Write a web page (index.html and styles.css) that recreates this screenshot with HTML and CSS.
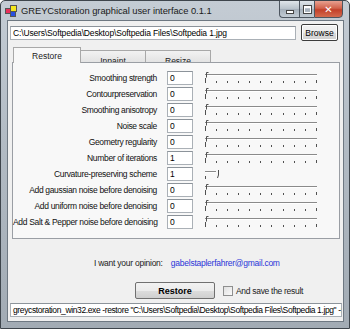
FILE: index.html
```html
<!DOCTYPE html>
<html>
<head>
<meta charset="utf-8">
<link rel="stylesheet" href="styles.css">
</head>
<body>
<div class="window">
  <div class="titlebar">
    <svg class="appicon" width="12" height="12" viewBox="0 0 12 12">
      <rect x="0.5" y="3.5" width="5" height="5" fill="#e8305a" stroke="#555"/>
      <rect x="5.5" y="0.5" width="6" height="6" fill="#f4e820" stroke="#555"/>
      <rect x="5.5" y="6.5" width="5" height="5" fill="#2850e0" stroke="#555"/>
    </svg>
    <span class="title">GREYCstoration graphical user interface 0.1.1</span>
    <div class="controls">
      <div class="ctl min"><span class="dash"></span></div>
      <div class="ctl max"><span class="sq"></span></div>
      <div class="ctl close">✕</div>
    </div>
  </div>
  <div class="client">
    <div class="pathrow">
      <div class="field path">C:\Users\Softpedia\Desktop\Softpedia Files\Softpedia 1.jpg</div>
      <div class="btn browse">Browse</div>
    </div>
    <div class="tabs">
      <div class="tab active">Restore</div>
      <div class="tab">Inpaint</div>
      <div class="tab">Resize</div>
    </div>
    <div class="panel">
      <div class="grid">
        <div class="lbl">Smoothing strength</div><div class="field num">0</div>
        <svg class="slider" width="116" height="14"><path class="groove" d="M1 3.5H113"/><path class="grooveL" d="M1 4.5H113"/><path class="thumb" d="M2.5 1.5v5M2.5 1.5h2"/><path class="ticks" d="M1.5 7v5M12.5 10v2M23.5 10v2M34.5 10v2M45.5 10v2M56.5 10v2M67.5 10v2M79.5 10v2M90.5 10v2M101.5 10v2M112.5 9v3"/></svg>
        <div class="lbl">Contourpreservation</div><div class="field num">0</div>
        <svg class="slider" width="116" height="14"><path class="groove" d="M1 3.5H113"/><path class="grooveL" d="M1 4.5H113"/><path class="thumb" d="M2.5 1.5v5M2.5 1.5h2"/><path class="ticks" d="M1.5 7v5M12.5 10v2M23.5 10v2M34.5 10v2M45.5 10v2M56.5 10v2M67.5 10v2M79.5 10v2M90.5 10v2M101.5 10v2M112.5 9v3"/></svg>
        <div class="lbl">Smoothing anisotropy</div><div class="field num">0</div>
        <svg class="slider" width="116" height="14"><path class="groove" d="M1 3.5H113"/><path class="grooveL" d="M1 4.5H113"/><path class="thumb" d="M2.5 1.5v5M2.5 1.5h2"/><path class="ticks" d="M1.5 7v5M12.5 10v2M23.5 10v2M34.5 10v2M45.5 10v2M56.5 10v2M67.5 10v2M79.5 10v2M90.5 10v2M101.5 10v2M112.5 9v3"/></svg>
        <div class="lbl">Noise scale</div><div class="field num">0</div>
        <svg class="slider" width="116" height="14"><path class="groove" d="M1 3.5H113"/><path class="grooveL" d="M1 4.5H113"/><path class="thumb" d="M2.5 1.5v5M2.5 1.5h2"/><path class="ticks" d="M1.5 7v5M12.5 10v2M23.5 10v2M34.5 10v2M45.5 10v2M56.5 10v2M67.5 10v2M79.5 10v2M90.5 10v2M101.5 10v2M112.5 9v3"/></svg>
        <div class="lbl">Geometry regularity</div><div class="field num">0</div>
        <svg class="slider" width="116" height="14"><path class="groove" d="M1 3.5H113"/><path class="grooveL" d="M1 4.5H113"/><path class="thumb" d="M2.5 1.5v5M2.5 1.5h2"/><path class="ticks" d="M1.5 7v5M12.5 10v2M23.5 10v2M34.5 10v2M45.5 10v2M56.5 10v2M67.5 10v2M79.5 10v2M90.5 10v2M101.5 10v2M112.5 9v3"/></svg>
        <div class="lbl">Number of iterations</div><div class="field num">1</div>
        <svg class="slider" width="116" height="14"><path class="groove" d="M1 3.5H113"/><path class="grooveL" d="M1 4.5H113"/><path class="thumb" d="M2.5 1.5v5M2.5 1.5h2"/><path class="ticks" d="M1.5 7v5M12.5 10v2M23.5 10v2M34.5 10v2M45.5 10v2M56.5 10v2M67.5 10v2M79.5 10v2M90.5 10v2M101.5 10v2M112.5 9v3"/></svg>
        <div class="lbl">Curvature-preserving scheme</div><div class="field num">1</div>
        <svg class="slider" width="116" height="14"><path class="groove" d="M1 4.5H12"/><path class="grooveL" d="M1 5.5H12"/><path class="thumb" d="M14.5 3v5M14.5 8l-1 3"/><path class="ticks" d="M1.5 9v3"/></svg>
        <div class="lbl">Add gaussian noise before denoising</div><div class="field num">0</div>
        <svg class="slider" width="116" height="14"><path class="groove" d="M1 3.5H113"/><path class="grooveL" d="M1 4.5H113"/><path class="thumb" d="M2.5 1.5v5M2.5 1.5h2"/><path class="ticks" d="M1.5 7v5M12.5 10v2M23.5 10v2M34.5 10v2M45.5 10v2M56.5 10v2M67.5 10v2M79.5 10v2M90.5 10v2M101.5 10v2M112.5 9v3"/></svg>
        <div class="lbl">Add uniform noise before denoising</div><div class="field num">0</div>
        <svg class="slider" width="116" height="14"><path class="groove" d="M1 3.5H113"/><path class="grooveL" d="M1 4.5H113"/><path class="thumb" d="M2.5 1.5v5M2.5 1.5h2"/><path class="ticks" d="M1.5 7v5M12.5 10v2M23.5 10v2M34.5 10v2M45.5 10v2M56.5 10v2M67.5 10v2M79.5 10v2M90.5 10v2M101.5 10v2M112.5 9v3"/></svg>
        <div class="lbl">Add Salt &amp; Pepper noise before denoising</div><div class="field num">0</div>
        <svg class="slider" width="116" height="14"><path class="groove" d="M1 3.5H113"/><path class="grooveL" d="M1 4.5H113"/><path class="thumb" d="M2.5 1.5v5M2.5 1.5h2"/><path class="ticks" d="M1.5 7v5M12.5 10v2M23.5 10v2M34.5 10v2M45.5 10v2M56.5 10v2M67.5 10v2M79.5 10v2M90.5 10v2M101.5 10v2M112.5 9v3"/></svg>
      </div>
    </div>
    <div class="opinion">I want your opinion: <span class="mail">gabelstaplerfahrer@gmail.com</span></div>
    <div class="actions">
      <div class="btn restore">Restore</div>
      <div class="chk"><span class="box"></span>And save the result</div>
    </div>
    <div class="field cmd">greycstoration_win32.exe -restore "C:\Users\Softpedia\Desktop\Softpedia Files\Softpedia 1.jpg" -nstep 1 -dt 0 -p 0 -a 0</div>
  </div>
</div>
</body>
</html>
```

FILE: styles.css
```css
html, body {
  margin: 0;
  padding: 0;
  background: #ffffff;
}
.window {
  width: 350px;
  height: 329px;
  box-sizing: border-box;
  display: flex;
  flex-direction: column;
  background: linear-gradient(180deg, #c4ccd4 0%, #b3bcc5 40%, #a2abb4 100%);
  border: 1px solid #3e454c;
  border-radius: 5px 5px 0 0;
  font-family: "Liberation Sans", Arial, sans-serif;
  font-size: 8.5px;
  color: #000;
  overflow: hidden;
}
.titlebar {
  height: 20px;
  display: flex;
  align-items: flex-start;
  padding-left: 4px;
  flex: none;
}
.appicon {
  margin-top: 4px;
  flex: none;
}
.title {
  margin-left: 4px;
  margin-top: 4px;
  font-size: 9.4px;
  color: #1a1a1a;
  letter-spacing: -0.05px;
  white-space: nowrap;
}
.controls {
  margin-left: auto;
  margin-right: 6px;
  display: flex;
  margin-top: -1px;
}
.ctl {
  height: 18px;
  box-sizing: border-box;
  border: 1px solid #4d5660;
  display: flex;
  align-items: center;
  justify-content: center;
  background: linear-gradient(180deg, #dfe5ea 0%, #b7c1ca 50%, #a4afba 51%, #c3ccd4 100%);
}
.min {
  width: 20px;
  border-radius: 0 0 0 4px;
  border-right: none;
}
.max {
  width: 15px;
  border-right: none;
}
.close {
  width: 29px;
  border-radius: 0 0 4px 0;
  background: linear-gradient(180deg, #e8a090 0%, #d2634c 45%, #c2402a 55%, #d46a4e 100%);
  color: #fff;
  font-size: 10px;
  font-weight: bold;
  font-family: "DejaVu Sans", sans-serif;
}
.dash {
  width: 6px;
  height: 2px;
  background: #fff;
  border: 1px solid #444;
  margin-top: 5px;
}
.sq {
  width: 5px;
  height: 4px;
  border: 1px solid #fff;
  border-top-width: 2px;
  outline: 1px solid #444;
}
.client {
  flex: 1;
  margin: 0 6px 7px 7px;
  background: #f0f0f0;
  box-shadow: 0 0 0 1px #6e7882;
  padding-left: 2px;
  display: flex;
  flex-direction: column;
}
.field {
  box-sizing: border-box;
  height: 14px;
  background: #fff;
  border: 1px solid #aab0b6;
  border-top-color: #8c939a;
  padding-left: 2px;
  line-height: 12px;
  white-space: nowrap;
  overflow: hidden;
  letter-spacing: -0.15px;
}
.pathrow {
  display: flex;
  align-items: center;
  margin-top: 3px;
  height: 17px;
}
.path {
  width: 286px;
}
.btn {
  box-sizing: border-box;
  height: 17px;
  border: 1px solid #707070;
  border-radius: 2px;
  background: linear-gradient(180deg, #f2f2f2 0%, #ebebeb 50%, #dddddd 51%, #cfcfcf 100%);
  display: flex;
  align-items: center;
  justify-content: center;
}
.browse {
  width: 37px;
  margin-left: 5px;
  box-shadow: inset 0 0 0 1px #fff;
  border-color: #3c3c3c;
}
.tabs {
  display: flex;
  align-items: flex-end;
  margin-top: 6px;
  margin-left: 3px;
  height: 15px;
}
.tab {
  box-sizing: border-box;
  width: 66px;
  height: 12px;
  border: 1px solid #a8a8a8;
  border-bottom: none;
  background: linear-gradient(180deg, #f2f2f2 0%, #e3e3e3 100%);
  text-align: center;
  line-height: 20px;
  overflow: hidden;
  color: #222;
  margin-left: -1px;
}
.tab.active {
  width: 68px;
  margin-left: 0;
  background: #f8f8f8;
  line-height: 17px;
  position: relative;
  z-index: 1;
  margin-bottom: -1px;
  height: 16px;
}
.panel {
  box-sizing: border-box;
  width: 328px;
  height: 177px;
  margin-left: 2px;
  border: 1px solid #9a9ea4;
  background: #f8f8f8;
  padding-top: 8px;
}
.grid {
  display: grid;
  grid-template-columns: 144px 26px 116px;
  column-gap: 10px;
  row-gap: 2px;
  grid-auto-rows: 14px;
  align-items: center;
}
.lbl {
  text-align: right;
  white-space: nowrap;
  letter-spacing: -0.33px;
  color: #111;
}
.num {
  width: 26px;
}
.slider {
  display: block;
  margin-left: 1px;
}
.groove {
  stroke: #8a8a8a;
  stroke-width: 1;
  fill: none;
}
.grooveL {
  stroke: #ffffff;
  stroke-width: 1;
  fill: none;
}
.thumb {
  stroke: #505050;
  stroke-width: 1;
  fill: none;
}
.ticks {
  stroke: #505050;
  stroke-width: 1;
  fill: none;
}
.opinion {
  margin-top: 18px;
  height: 12px;
  line-height: 12px;
  padding-left: 84px;
  white-space: nowrap;
  letter-spacing: -0.25px;
  color: #222;
}
.mail {
  color: #2a35d8;
  margin-left: 6px;
}
.actions {
  display: flex;
  align-items: center;
  margin-top: 13px;
  height: 17px;
}
.restore {
  width: 80px;
  margin-left: 125px;
  font-weight: bold;
  font-size: 9px;
}
.chk {
  display: flex;
  align-items: center;
  margin-left: 8px;
  color: #222;
  letter-spacing: -0.3px;
}
.box {
  box-sizing: border-box;
  width: 10px;
  height: 10px;
  border: 1px solid #8e8f8f;
  background: linear-gradient(135deg, #e0e0e0 0%, #fafafa 100%);
  margin-right: 3px;
}
.cmd {
  width: 332px;
  margin-top: 4px;
  letter-spacing: -0.38px;
}
```
